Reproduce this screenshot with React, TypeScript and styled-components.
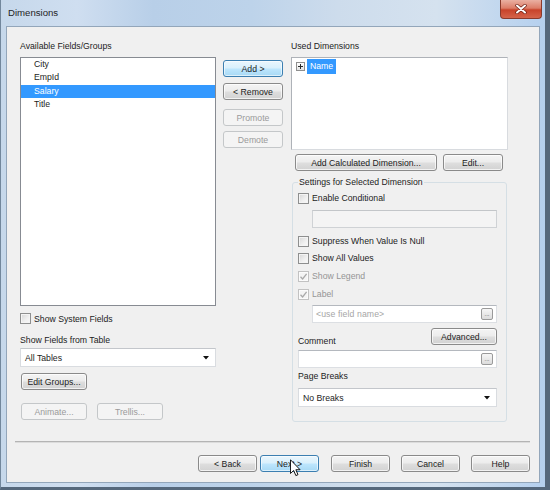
import React from "react";
import styled, { createGlobalStyle, css } from "styled-components";

const GlobalStyle = createGlobalStyle`
  html, body { margin: 0; padding: 0; }
  body {
    width: 550px;
    height: 490px;
    overflow: hidden;
    font-family: "Liberation Sans", Arial, sans-serif;
    font-size: 8.7px;
    color: #1c1c1c;
  }
  * { box-sizing: border-box; }
`;

type BtnState = "normal" | "hover" | "disabled";

function Dimensions() {
  return (
    <Frame>
      <TitleBar>
        <Title>Dimensions</Title>
        <CloseButton>
          <svg width="12" height="10" viewBox="0 0 12 10">
            <path d="M2 1.5 L10 8.5 M10 1.5 L2 8.5" stroke="#6b1c10" strokeWidth="3.4" strokeLinecap="round" />
            <path d="M2 1.5 L10 8.5 M10 1.5 L2 8.5" stroke="#ffffff" strokeWidth="2" strokeLinecap="round" />
          </svg>
        </CloseButton>
      </TitleBar>
      <Client>
        <Main>
          <LeftCol>
            <Label>Available Fields/Groups</Label>
            <ListBox>
              <ListItem>City</ListItem>
              <ListItem>EmpId</ListItem>
              <ListItem $selected>Salary</ListItem>
              <ListItem>Title</ListItem>
            </ListBox>
            <CheckRow $mt={6}>
              <CheckBox />
              <span>Show System Fields</span>
            </CheckRow>
            <Label $mt={9.5}>Show Fields from Table</Label>
            <Select $mt={2.5}>
              <span>All Tables</span>
              <Arrow />
            </Select>
            <Button $w={66} $mt={6} $ml={1}>Edit Groups...</Button>
            <ButtonRow $mt={13}>
              <Button $w={66} $ml={1} $state="disabled">Animate...</Button>
              <Button $w={66} $ml={10} $state="disabled">Trellis...</Button>
            </ButtonRow>
          </LeftCol>

          <MidCol>
            <Button $w={60} $state="hover">Add &gt;</Button>
            <Button $w={60} $mt={6}>&lt; Remove</Button>
            <Button $w={60} $mt={9} $state="disabled">Promote</Button>
            <Button $w={60} $mt={5} $state="disabled">Demote</Button>
          </MidCol>

          <RightCol>
            <Label>Used Dimensions</Label>
            <TreeBox>
              <TreeNode>
                <PlusBox>
                  <svg width="7" height="7" viewBox="0 0 7 7">
                    <path d="M1 3.5 H6 M3.5 1 V6" stroke="#2b2b2b" strokeWidth="1" />
                  </svg>
                </PlusBox>
                <TreeLabel>Name</TreeLabel>
              </TreeNode>
            </TreeBox>
            <ButtonRow $mt={4} $pl={4}>
              <Button $w={142}>Add Calculated Dimension...</Button>
              <Button $w={60} $ml={6}>Edit...</Button>
            </ButtonRow>
            <Group>
              <Legend>Settings for Selected Dimension</Legend>
              <CheckRow $mt={3.5}>
                <CheckBox />
                <span>Enable Conditional</span>
              </CheckRow>
              <TextBox $mt={5.5} $indent $disabled />
              <CheckRow $mt={6.5}>
                <CheckBox />
                <span>Suppress When Value Is Null</span>
              </CheckRow>
              <CheckRow $mt={4}>
                <CheckBox />
                <span>Show All Values</span>
              </CheckRow>
              <CheckRow $mt={5} $disabled>
                <CheckBox checked disabled />
                <span>Show Legend</span>
              </CheckRow>
              <CheckRow $mt={5} $disabled>
                <CheckBox checked disabled />
                <span>Label</span>
              </CheckRow>
              <TextBox $mt={4.5} $indent>
                <Placeholder>&lt;use field name&gt;</Placeholder>
                <EllipsisButton>...</EllipsisButton>
              </TextBox>
              <CommentRow>
                <CommentLabel>Comment</CommentLabel>
                <Button $w={66}>Advanced...</Button>
              </CommentRow>
              <TextBox $mt={5}>
                <span />
                <EllipsisButton>...</EllipsisButton>
              </TextBox>
              <Label $mt={2.5}>Page Breaks</Label>
              <Select $mt={6.5}>
                <span>No Breaks</span>
                <Arrow />
              </Select>
            </Group>
          </RightCol>
        </Main>

        <Separator />

        <Footer>
          <Button $w={59}>&lt; Back</Button>
          <Button $w={59} $ml={3} $state="hover" $relative>
            Next &gt;
            <Cursor />
          </Button>
          <Button $w={59} $ml={12}>Finish</Button>
          <Button $w={59} $ml={11}>Cancel</Button>
          <Button $w={59} $ml={11}>Help</Button>
        </Footer>
      </Client>
    </Frame>
  );
}

function CheckBox({ checked, disabled }: { checked?: boolean; disabled?: boolean }) {
  return (
    <Box $disabled={disabled}>
      {checked && (
        <svg width="9" height="9" viewBox="0 0 9 9">
          <path d="M1.5 4.8 L3.6 7 L7.6 1.8" fill="none" stroke={disabled ? "#a9a9a9" : "#2a2a2a"} strokeWidth="1.3" />
        </svg>
      )}
    </Box>
  );
}

function Arrow() {
  return (
    <svg width="6" height="4" viewBox="0 0 6 4">
      <path d="M0 0 H6 L3 3.5 Z" fill="#111" />
    </svg>
  );
}

function Cursor() {
  return (
    <CursorSvg width="11" height="18" viewBox="0 0 12 19">
      <path
        d="M0.5 0.5 L0.5 15.5 L4 12.2 L6.4 17.8 L8.7 16.8 L6.4 11.4 L11 11.4 Z"
        fill="#ffffff"
        stroke="#000000"
        strokeWidth="1"
        strokeLinejoin="round"
      />
    </CursorSvg>
  );
}

const Frame = styled.div`
  width: 550px;
  height: 490px;
  display: flex;
  flex-direction: column;
  padding: 0 5px 4px 5px;
  border-left: 1px solid #72879c;
  border-right: 5px solid #55687c;
  border-bottom: 3px solid #55687c;
  background: linear-gradient(
    90deg,
    #c6d8eb 0%,
    #cfdef0 14%,
    #b8cfe8 28%,
    #bdd3ea 46%,
    #cddcec 62%,
    #d5e2ef 80%,
    #b5d0ee 100%
  );
`;

const TitleBar = styled.div`
  height: 26px;
  display: flex;
  align-items: flex-start;
  justify-content: space-between;
`;

const Title = styled.div`
  padding-left: 2px;
  line-height: 26px;
  font-size: 9.6px;
  color: #1e1e1e;
`;

const CloseButton = styled.div`
  width: 42px;
  height: 19px;
  margin-right: -2px;
  display: flex;
  align-items: center;
  justify-content: center;
  border: 1px solid #8a3a2c;
  border-top: none;
  border-radius: 0 0 4px 4px;
  background: linear-gradient(#eab0a2 0%, #dc7d68 45%, #c8432a 55%, #d5644a 100%);
`;

const Client = styled.div`
  flex: 1;
  display: flex;
  flex-direction: column;
  padding: 14px 9px 10px 13px;
  border: 1px solid #93a6ba;
  background: #f0f0f0;
`;

const Main = styled.div`
  display: flex;
  align-items: flex-start;
`;

const LeftCol = styled.div`
  width: 196px;
  display: flex;
  flex-direction: column;
`;

const MidCol = styled.div`
  width: 60px;
  margin-left: 7px;
  padding-top: 19px;
  display: flex;
  flex-direction: column;
`;

const RightCol = styled.div`
  width: 217px;
  margin-left: 8px;
  display: flex;
  flex-direction: column;
`;

const Label = styled.div<{ $mt?: number }>`
  height: 11px;
  line-height: 11px;
  margin-top: ${({ $mt = 0 }) => $mt}px;
  margin-bottom: ${({ $mt }) => ($mt === undefined ? 5 : 0)}px;
  white-space: nowrap;
`;

const ListBox = styled.div`
  height: 249px;
  border: 1px solid #878b92;
  background: #ffffff;
`;

const ListItem = styled.div<{ $selected?: boolean }>`
  height: 13.4px;
  line-height: 13.4px;
  padding-left: 13px;
  ${({ $selected }) =>
    $selected &&
    css`
      background: #3399ff;
      color: #ffffff;
    `}
`;

const CheckRow = styled.div<{ $mt?: number; $disabled?: boolean }>`
  height: 13px;
  margin-top: ${({ $mt = 0 }) => $mt}px;
  display: flex;
  align-items: center;
  gap: 3px;
  white-space: nowrap;
  color: ${({ $disabled }) => ($disabled ? "#959595" : "#1c1c1c")};
`;

const Box = styled.div<{ $disabled?: boolean }>`
  width: 11px;
  height: 11px;
  display: flex;
  align-items: center;
  justify-content: center;
  border: 1px solid ${({ $disabled }) => ($disabled ? "#c2c2c2" : "#8e8f8f")};
  background: ${({ $disabled }) =>
    $disabled ? "#f4f4f4" : "linear-gradient(135deg, #d6d6d6 0%, #f0f0f0 60%, #fafafa 100%)"};
  box-shadow: inset 0 0 0 1px ${({ $disabled }) => ($disabled ? "#fbfbfb" : "#f4f4f4")};
`;

const Select = styled.div<{ $mt?: number }>`
  height: 19px;
  margin-top: ${({ $mt = 0 }) => $mt}px;
  display: flex;
  align-items: center;
  justify-content: space-between;
  padding: 0 6px 0 4px;
  border: 1px solid #d9dce0;
  border-top-color: #c3c6cb;
  background: #ffffff;
`;

const Button = styled.div<{ $w: number; $mt?: number; $ml?: number; $state?: BtnState; $relative?: boolean }>`
  width: ${({ $w }) => $w}px;
  height: 17px;
  flex-shrink: 0;
  margin-top: ${({ $mt = 0 }) => $mt}px;
  margin-left: ${({ $ml = 0 }) => $ml}px;
  display: flex;
  align-items: center;
  justify-content: center;
  border-radius: 3px;
  white-space: nowrap;
  position: ${({ $relative }) => ($relative ? "relative" : "static")};
  ${({ $state = "normal" }) =>
    $state === "hover"
      ? css`
          border: 1px solid #3c7fb1;
          background: linear-gradient(#eaf6fd 0%, #d9f0fc 48%, #bee6fd 52%, #a7d9f5 100%);
          box-shadow: inset 0 0 0 1px rgba(255, 255, 255, 0.6);
          color: #1c1c1c;
        `
      : $state === "disabled"
      ? css`
          border: 1px solid #c4c7c9;
          background: #f4f4f4;
          color: #9a9a9a;
        `
      : css`
          border: 1px solid #8a8a8a;
          background: linear-gradient(#f4f4f4 0%, #ececec 48%, #dedede 52%, #d2d2d2 100%);
          box-shadow: inset 0 0 0 1px rgba(255, 255, 255, 0.7);
          color: #1c1c1c;
        `}
`;

const ButtonRow = styled.div<{ $mt?: number; $pl?: number }>`
  display: flex;
  margin-top: ${({ $mt = 0 }) => $mt}px;
  padding-left: ${({ $pl = 0 }) => $pl}px;
`;

const TreeBox = styled.div`
  height: 93px;
  padding: 1px 0 0 4px;
  border: 1px solid #aeb2b8;
  border-right-color: #d8dbdf;
  border-bottom-color: #d8dbdf;
  background: #ffffff;
`;

const TreeNode = styled.div`
  display: flex;
  align-items: center;
  gap: 2px;
`;

const PlusBox = styled.div`
  width: 9px;
  height: 9px;
  display: flex;
  align-items: center;
  justify-content: center;
  border: 1px solid #8f8f8f;
  background: linear-gradient(#ffffff, #e4e4e4);
`;

const TreeLabel = styled.div`
  height: 15px;
  line-height: 15px;
  padding: 0 3px;
  background: #3399ff;
  color: #ffffff;
`;

const Group = styled.fieldset`
  width: 215px;
  margin: 6px 0 0 1px;
  padding: 0 9px 14px 5px;
  min-width: 0;
  display: flex;
  flex-direction: column;
  border: 1px solid #d5dfe5;
  border-radius: 3px;
`;

const Legend = styled.legend`
  padding: 0 1px;
  line-height: 11px;
  font-size: 8.7px;
`;

const TextBox = styled.div<{ $mt?: number; $indent?: boolean; $disabled?: boolean }>`
  height: 18px;
  margin-top: ${({ $mt = 0 }) => $mt}px;
  margin-left: ${({ $indent }) => ($indent ? 14 : 0)}px;
  display: flex;
  align-items: center;
  justify-content: space-between;
  padding: 0 3px 0 3px;
  border: 1px solid ${({ $disabled }) => ($disabled ? "#cfd2d5" : "#dcdfe3")};
  border-top-color: ${({ $disabled }) => ($disabled ? "#c3c6c9" : "#b4b8be")};
  background: ${({ $disabled }) => ($disabled ? "#f4f4f4" : "#ffffff")};
`;

const Placeholder = styled.span`
  color: #a6a6a6;
  letter-spacing: 0.1px;
`;

const EllipsisButton = styled.div`
  width: 12px;
  height: 12px;
  display: flex;
  align-items: flex-end;
  justify-content: center;
  padding-bottom: 2px;
  font-size: 6px;
  line-height: 6px;
  color: #444;
  border: 1px solid #9a9a9a;
  border-radius: 2px;
  background: linear-gradient(#f6f6f6, #dcdcdc);
`;

const CommentRow = styled.div`
  height: 17px;
  margin-top: 5px;
  display: flex;
  align-items: flex-end;
  justify-content: space-between;
`;

const CommentLabel = styled.div`
  line-height: 11px;
  margin-bottom: -2px;
`;

const Separator = styled.div`
  height: 2px;
  margin: 19px 0 0 -5px;
  border-top: 1px solid #b4b4b4;
  border-bottom: 1px solid #dcdcdc;
`;

const Footer = styled.div`
  display: flex;
  justify-content: flex-end;
  margin-top: 12px;
`;

const CursorSvg = styled.svg`
  position: absolute;
  left: 29px;
  top: 3px;
`;

export default function App() {
  return (
    <>
      <GlobalStyle />
      <Dimensions />
    </>
  );
}
